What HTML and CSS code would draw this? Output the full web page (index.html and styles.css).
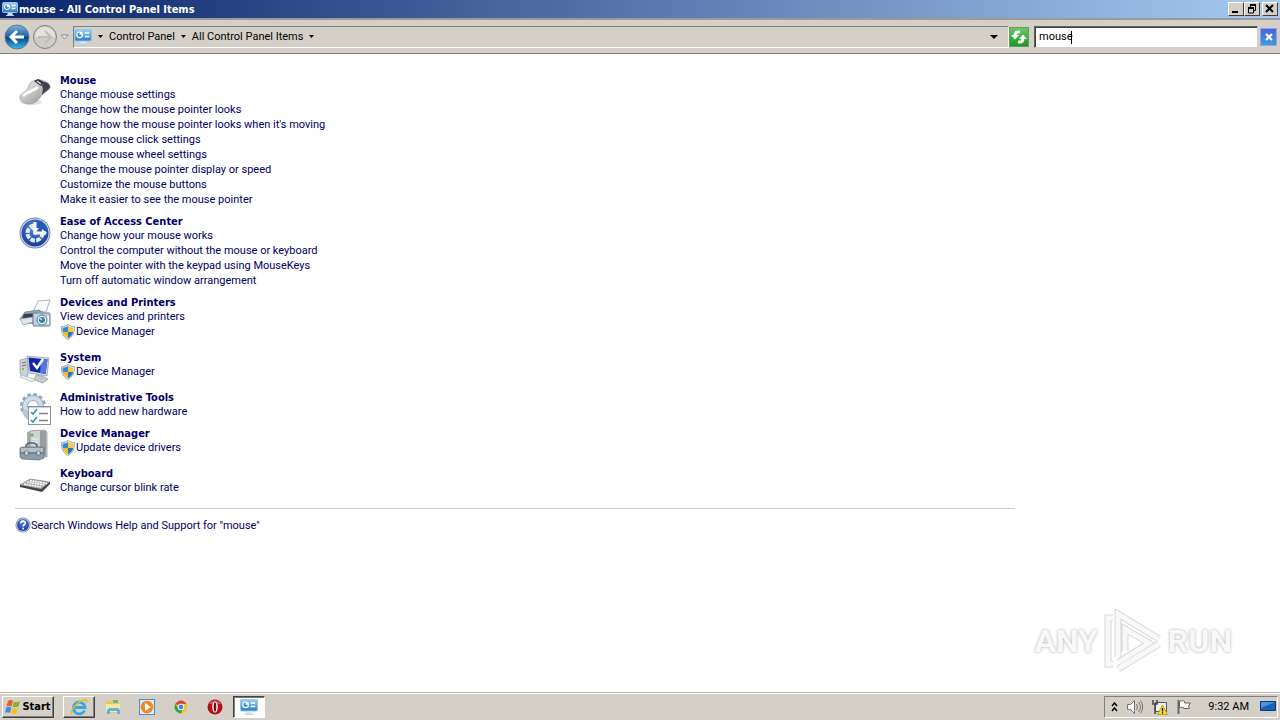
FILE: index.html
```
<!DOCTYPE html>
<html lang="en">
<head>
    <meta charset="UTF-8">
    <meta name="viewport" content="width=device-width, initial-scale=1.0">
    <title>mouse - All Control Panel Items</title>
    <link rel="stylesheet" href="styles.css">
</head>
<body>
    <!-- Shared icons -->
    <svg class="defs" width="0" height="0">
        <defs>
            <linearGradient id="gBlue" x1="0" y1="0" x2="0" y2="1"><stop offset="0" stop-color="#9bd0f2"/><stop offset="1" stop-color="#2a7dc0"/></linearGradient>
            <linearGradient id="gNav" x1="0" y1="0" x2="0" y2="1"><stop offset="0" stop-color="#7fb4dd"/><stop offset=".48" stop-color="#1f5fa6"/><stop offset=".52" stop-color="#0b3f82"/><stop offset="1" stop-color="#35c0f0"/></linearGradient>
            <linearGradient id="gGrey" x1="0" y1="0" x2="1" y2="1"><stop offset="0" stop-color="#f4f4f4"/><stop offset="1" stop-color="#8c8c8c"/></linearGradient>
            <radialGradient id="gBall" cx=".5" cy=".3" r=".7"><stop offset="0" stop-color="#5a86d8"/><stop offset="1" stop-color="#163a9c"/></radialGradient>
        </defs>
        <symbol id="cpanel" viewBox="0 0 16 16">
            <rect x="0.5" y="1.5" width="15" height="10" rx="1" fill="url(#gBlue)" stroke="#8cc4ea"/>
            <circle cx="5" cy="6" r="2.5" fill="#3b8fd0" stroke="#fff"/>
            <path d="M5 6V3.500A2.500 2.500 0 0 1 7.500 6z" fill="#fff"/>
            <path d="M9.500 4.500h4M9.500 7.500h4" stroke="#fff" stroke-width="1.300"/>
            <path d="M6 12h4l1 2H5z" fill="#d9e6ef"/><path d="M4 14.500h8" stroke="#b7cfe0"/>
        </symbol>
        <symbol id="shield" viewBox="0 0 16 16">
            <path d="M8 .5C10 2 12.500 2.500 14.500 2.500c.3 6-1.500 10.500-6.500 13C3 13 1.200 8.500 1.500 2.500 3.500 2.500 6 2 8 .5z" fill="#dfe5ea" stroke="#8d99a3" stroke-width=".8"/>
            <path d="M8 2v6H2.800C2.600 6.500 2.600 5 2.700 3.700 4.700 3.600 6.500 3 8 2z" fill="#3487d6"/>
            <path d="M8 2v6h5.200c.2-1.500.2-3 .1-4.300C11.300 3.600 9.500 3 8 2z" fill="#f9cb32"/>
            <path d="M8 8v6.200C5 12.800 3.300 10.700 2.800 8z" fill="#f4bd20"/>
            <path d="M8 8v6.200c3-1.400 4.700-3.500 5.200-6.200z" fill="#2b74c8"/>
        </symbol>
    </svg>

    <div class="window">
        <header class="titlebar">
            <svg class="icon16"><use href="#cpanel"/></svg>
            <h1>mouse - All Control Panel Items</h1>
            <div class="window-buttons">
                <button type="button" aria-label="Minimize"><svg width="10" height="10"><path d="M1 8h6" stroke="#000" stroke-width="2"/></svg></button>
                <button type="button" aria-label="Restore"><svg width="10" height="10" fill="none" stroke="#000"><path d="M3 1h6M3.500 1v2M8.500 1v5.500H7M1 4h6M1.500 4v5h5V4"/><path d="M3 1h6M1 4h6" stroke-width="2"/></svg></button>
                <button type="button" class="close" aria-label="Close"><svg width="10" height="10"><path d="M1 1l7 7M8 1L1 8" stroke="#000" stroke-width="2"/></svg></button>
            </div>
        </header>

        <nav class="toolbar">
            <button type="button" class="nav-button" aria-label="Back">
                <svg width="26" height="26" viewBox="0 0 26 26"><circle cx="13" cy="13" r="12" fill="url(#gNav)" stroke="#5f7890"/><path d="M20 13H8M13 7l-6 6 6 6" fill="none" stroke="#fff" stroke-width="3"/></svg>
            </button>
            <button type="button" class="nav-button" aria-label="Forward">
                <svg width="26" height="26" viewBox="0 0 26 26"><circle cx="13" cy="13" r="11.500" fill="#cfccc7" stroke="#85827e"/><path d="M3 13a10 10 0 0 1 20 0z" fill="#e4e2df"/><path d="M6 13h12M13 7l6 6-6 6" fill="none" stroke="#c0bdb8" stroke-width="2"/></svg>
            </button>
            <button type="button" class="history" aria-label="Recent pages">
                <svg width="9" height="6"><path d="M1 1h7L4.500 5z" fill="#eee" stroke="#8b8b93"/></svg>
            </button>
            <div class="address">
                <svg class="address-icon"><use href="#cpanel"/></svg>
                <svg class="arrow" width="5" height="3"><path d="M0 0h5L2.500 3z"/></svg>
                <a href="#">Control Panel</a>
                <svg class="arrow" width="5" height="3"><path d="M0 0h5L2.500 3z"/></svg>
                <a href="#">All Control Panel Items</a>
                <svg class="arrow" width="5" height="3"><path d="M0 0h5L2.500 3z"/></svg>
                <button type="button" class="address-drop" aria-label="Previous locations"><svg width="8" height="4"><path d="M0 0h8L4 4z"/></svg></button>
            </div>
            <button type="button" class="refresh" aria-label="Refresh">
                <svg width="18" height="18" viewBox="0 0 18 18" fill="none" stroke="#fff" stroke-width="3"><path d="M10 4C6 3.500 5 5 5 8M8 14c4 .5 5-1 5-4"/><path d="M1 7h8L5 11.500zM9 11h8L13 6.500z" fill="#fff" stroke="none"/></svg>
            </button>
            <div class="search">
                <input type="text" value="mouse" aria-label="Search Control Panel">
                <span class="caret"></span>
            </div>
            <button type="button" class="clear" aria-label="Clear search">
                <svg width="8" height="8"><path d="M1 1l6 6M7 1L1 7" stroke="#fff" stroke-width="2"/></svg>
            </button>
        </nav>

        <main class="content">
            <section class="item">
                <svg class="item-icon" viewBox="0 0 32 32">
                    <ellipse cx="12" cy="26" rx="11" ry="3" fill="#e2e2e2"/>
                    <path d="M14 5c6-3 15 0 17 5 1 4-4 5-8 9-3 4-6 9-13 9-6 0-10-4-9-8 1-3 6-4 8-8 1-3 2-6 5-7z" fill="url(#gGrey)" stroke="#999" stroke-width=".6"/>
                    <path d="M24 6c4 0 7 2 7 5-1 3-5 4-8 8 0-3 2-6 0-9z" fill="#3e404b"/>
                    <path d="M15 5l4-2 6 3-3 4z" fill="#30323d"/><path d="M18 5l4 3" stroke="#ddd" stroke-width="1.500"/>
                    <path d="M4 20c5-5 11-5 15-9" fill="none" stroke="#fff" stroke-width="3"/>
                </svg>
                <div>
                    <h2><a href="#">Mouse</a></h2>
                    <ul>
                        <li><a href="#">Change mouse settings</a></li>
                        <li><a href="#">Change how the mouse pointer looks</a></li>
                        <li><a href="#">Change how the mouse pointer looks when it's moving</a></li>
                        <li><a href="#">Change mouse click settings</a></li>
                        <li><a href="#">Change mouse wheel settings</a></li>
                        <li><a href="#">Change the mouse pointer display or speed</a></li>
                        <li><a href="#">Customize the mouse buttons</a></li>
                        <li><a href="#">Make it easier to see the mouse pointer</a></li>
                    </ul>
                </div>
            </section>

            <section class="item">
                <svg class="item-icon" viewBox="0 0 32 32">
                    <circle cx="16" cy="16" r="15.500" fill="#7d8ba8"/><circle cx="16" cy="16" r="14.500" fill="#d3def2"/><circle cx="16" cy="16" r="13.500" fill="url(#gBall)"/>
                    <circle cx="16" cy="16" r="7.500" fill="none" stroke="#dfe9fa" stroke-width="4" stroke-dasharray="4.700 1.190"/>
                    <path d="M15 4h8l5 8v3H15V4z" fill="#285bb8"/>
                    <path d="M16 5v10M17 16h10" fill="none" stroke="#fff" stroke-width="3"/>
                    <path d="M12 11h8l-4 5zM23 12l5 4-5 4z" fill="#fff"/>
                    <circle cx="16" cy="16" r="2" fill="#fff"/>
                </svg>
                <div>
                    <h2><a href="#">Ease of Access Center</a></h2>
                    <ul>
                        <li><a href="#">Change how your mouse works</a></li>
                        <li><a href="#">Control the computer without the mouse or keyboard</a></li>
                        <li><a href="#">Move the pointer with the keypad using MouseKeys</a></li>
                        <li><a href="#">Turn off automatic window arrangement</a></li>
                    </ul>
                </div>
            </section>

            <section class="item">
                <svg class="item-icon" viewBox="0 0 32 32">
                    <path d="M19 3l12-1-4 12H14z" fill="#f8fafc" stroke="#a8b3bf"/>
                    <path d="M6 14l14-2 6 4v8L5 26l-4-5z" fill="#9aa8b4" stroke="#667480" stroke-width=".7"/>
                    <path d="M5 16l14-1v4L3 21z" fill="#35414d"/><path d="M1 21l13-2v5L4 27z" fill="#dce5ec" stroke="#8b98a4" stroke-width=".6"/>
                    <rect x="14" y="15" width="17" height="13" rx="1" fill="#bfd1df" stroke="#6b7f91"/>
                    <path d="M18 15v-2h6v2" fill="#8aa0b2"/><path d="M29 18v8" stroke="#edf4f9" stroke-width="2"/>
                    <circle cx="23" cy="22" r="5" fill="#e9f1f7" stroke="#61788c"/><circle cx="23" cy="22" r="3" fill="#2986b8"/><circle cx="22" cy="21" r="1" fill="#bfeaff"/>
                </svg>
                <div>
                    <h2><a href="#">Devices and Printers</a></h2>
                    <ul>
                        <li><a href="#">View devices and printers</a></li>
                        <li class="admin"><svg class="icon16"><use href="#shield"/></svg><a href="#">Device Manager</a></li>
                    </ul>
                </div>
            </section>

            <section class="item">
                <svg class="item-icon" viewBox="0 0 32 32">
                    <path d="M1 7l8-2v18l-6 1-2-4z" fill="#cbd1d6" stroke="#8e969c" stroke-width=".7"/><path d="M3 10l4-1M3 13l4-1" stroke="#6d7880"/><circle cx="4" cy="16" r="1" fill="#57b847"/>
                    <path d="M8 3l22 2-2 18L10 20z" fill="#d7dbe0" stroke="#8e969c" stroke-width=".7"/>
                    <path d="M9.500 4.500L28.500 6.500 26.500 21 11 18z" fill="#1026a8"/>
                    <path d="M22 6l6.500.5L26.500 21 21 20z" fill="#4f78e4"/>
                    <path d="M14 10l4 5 6-9" fill="none" stroke="#fff" stroke-width="2.500"/>
                    <path d="M17 22l6 1 6 3-5 4-9-3z" fill="#c4c9ce" stroke="#858d94" stroke-width=".6"/>
                    <path d="M2 22l14 4-3 3-12-5z" fill="#e9ecef" stroke="#a0a7ac" stroke-width=".6"/>
                </svg>
                <div>
                    <h2><a href="#">System</a></h2>
                    <ul>
                        <li class="admin"><svg class="icon16"><use href="#shield"/></svg><a href="#">Device Manager</a></li>
                    </ul>
                </div>
            </section>

            <section class="item">
                <svg class="item-icon" viewBox="0 0 32 32">
                    <circle cx="14" cy="13" r="11.500" fill="none" stroke="#91a5b5" stroke-width="3" stroke-dasharray="3.500 2.520"/>
                    <circle cx="14" cy="13" r="8" fill="none" stroke="#9fb2c1" stroke-width="6"/>
                    <circle cx="14" cy="13" r="8" fill="none" stroke="#d2dde6" stroke-width="4"/>
                    <path d="M3 18l4-2 5 8-3 3c-3-2-5-5-6-9z" fill="#b7c7d4"/>
                    <rect x="9.500" y="13.500" width="22" height="18" fill="#fff" stroke="#8d9499"/>
                    <path d="M10 14.500h21" stroke="#c9d0d6"/>
                    <path d="M12 19l2 2 4-5M12 27l2 2 4-5" fill="none" stroke="#2a9cb8" stroke-width="1.700"/>
                    <path d="M20 20.500h9M20 27.500h9" stroke="#7b858c" stroke-width="1.500"/>
                </svg>
                <div>
                    <h2><a href="#">Administrative Tools</a></h2>
                    <ul>
                        <li><a href="#">How to add new hardware</a></li>
                    </ul>
                </div>
            </section>

            <section class="item">
                <svg class="item-icon" viewBox="0 0 32 32">
                    <path d="M8 3l9-2v23H8z" fill="#a9aeb0"/><path d="M11 2l15-1 2 2v25l-17-2z" fill="#cfd3d4" stroke="#858b8d" stroke-width=".7"/>
                    <path d="M21 2h6v25l-6-1z" fill="#989ea0"/><path d="M13 10h6M13 13h6" stroke="#edf0f0"/><circle cx="13" cy="6" r="1.500" fill="#55b83a"/>
                    <path d="M7 19v-3l3-2h5l3 2v3" fill="none" stroke="#59646c" stroke-width="1.500"/>
                    <path d="M1 19l2-1h19l3 1v10l-5 2-17-1-2-2z" fill="#8e9ca7" stroke="#606c76" stroke-width=".7"/>
                    <path d="M2 19h22v4H2z" fill="#b5c0c8"/><path d="M1 24h24" stroke="#606c76"/><path d="M6 22h3v4H6zM18 22h3v4h-3z" fill="#dfe6eb" stroke="#55616c" stroke-width=".6"/>
                </svg>
                <div>
                    <h2><a href="#">Device Manager</a></h2>
                    <ul>
                        <li class="admin"><svg class="icon16"><use href="#shield"/></svg><a href="#">Update device drivers</a></li>
                    </ul>
                </div>
            </section>

            <section class="item">
                <svg class="item-icon" viewBox="0 0 32 32">
                    <path d="M1 16l10-6 20 3-8 9z" fill="#aaa" stroke="#777" stroke-width=".6"/>
                    <path d="M1 16l21 4 9-7v2l-8 8-22-5z" fill="#444"/>
                    <path d="M5 15l17 3M8 13l17 3M11 11.500l17 3" stroke="#f7f7f7" stroke-width="1.600" stroke-dasharray="2 .6"/>
                </svg>
                <div>
                    <h2><a href="#">Keyboard</a></h2>
                    <ul>
                        <li><a href="#">Change cursor blink rate</a></li>
                    </ul>
                </div>
            </section>

            <footer class="help">
                <svg class="icon16" viewBox="0 0 16 16"><circle cx="8" cy="8" r="7.500" fill="#6f7f9b"/><circle cx="8" cy="8" r="6.800" fill="#d5dfef"/><circle cx="8" cy="8" r="6" fill="url(#gBall)"/><path d="M5.800 6.300C5.800 3.500 10.300 3.600 10.300 6c0 1.600-2.200 1.600-2.200 3.500M8.100 10.800v1.700" fill="none" stroke="#fff" stroke-width="1.700"/></svg>
                <a href="#">Search Windows Help and Support for "mouse"</a>
            </footer>
        </main>
    </div>

    <div class="watermark">
        <span>ANY</span>
        <svg width="60" height="64" viewBox="0 0 60 64" fill="none">
            <path d="M10 9H5v46h5M15 48V5L56 30M56 35L15 60M22 42V20L46 34 16 53" stroke="#d9d9d9" stroke-width="7"/>
            <path d="M10 9H5v46h5M15 48V5L56 30M56 35L15 60M22 42V20L46 34 16 53" stroke="#f8f8f8" stroke-width="5"/>
        </svg>
        <span>RUN</span>
    </div>

    <footer class="taskbar">
        <button type="button" class="start">
            <svg width="16" height="16" viewBox="0 0 16 16"><path d="M3 2c2-1.500 4-1 5 0L6.500 7.500C5 6.500 3.500 6.500 1.500 7.500z" fill="#ed5b24"/><path d="M9 2.500c2 1 4 .8 6-.5l-1.500 5.500c-2 1-4 1-6 .2z" fill="#7db72f"/><path d="M1.200 8.500c2-1 3.700-1 5 0L5 14c-1.700-1.200-3.500-1-5 0z" fill="#3c8fd9"/><path d="M7.200 9c2 1 4 .8 6-.3L12 14c-2 1.200-4 1.200-6 .2z" fill="#fbbd16"/></svg>
            Start
        </button>
        <div class="tasks">
            <button type="button" class="open" aria-label="Internet Explorer">
                <svg width="18" height="18" viewBox="0 0 18 18" fill="none"><path d="M14.500 12.500A5.800 5.800 0 1 1 15 9.500H5" stroke="#35a8e5" stroke-width="2.800"/><path d="M2 16C-1 13 9 2 15.500 1.500c2 .3 1.200 2.500.5 3.500" stroke="#f1b81d" stroke-width="1.500"/></svg>
            </button>
            <button type="button" aria-label="Explorer">
                <svg width="18" height="18" viewBox="0 0 18 18"><path d="M2 3h5l1 2h8v10H2z" fill="#e9c85a"/><path d="M2 6h14v8H2z" fill="#f8e9a0"/><path d="M9 2h5v3H9z" fill="#67b77b"/><path d="M3 16v-4l2-2h9l2 2v4h-3v-3H6v3z" fill="#65b3dc"/></svg>
            </button>
            <button type="button" aria-label="Media Player">
                <svg width="18" height="18" viewBox="0 0 18 18"><rect x="1.500" y="1.500" width="15" height="15" fill="#d8ecfa" stroke="#4b91c9"/><circle cx="9" cy="9" r="6.300" fill="#f4881e"/><path d="M7 5l6 4-6 4z" fill="#fff"/></svg>
            </button>
            <button type="button" aria-label="Chrome">
                <svg width="18" height="18" viewBox="0 0 18 18"><circle cx="9" cy="9" r="6.500" fill="#f4c527"/><path d="M9 9L3.400 5.800A6.500 6.500 0 0 1 14.600 5.800L9 6z" fill="#dc4638"/><path d="M9 15.500A6.500 6.500 0 0 1 3.400 5.800L6.500 11 11 11z" fill="#36a353"/><circle cx="9" cy="9" r="3.200" fill="#fff"/><circle cx="9" cy="9" r="2.400" fill="#4285e8"/></svg>
            </button>
            <button type="button" aria-label="Opera">
                <svg width="18" height="18" viewBox="0 0 18 18"><circle cx="9" cy="9" r="7.500" fill="#b70f18"/><path d="M3 6a7 7 0 0 1 12 0z" fill="#d9545a"/><ellipse cx="9" cy="9" rx="2.800" ry="5.500" fill="#fff"/><ellipse cx="9" cy="9" rx="1.300" ry="4.700" fill="#7b0b10"/></svg>
            </button>
            <button type="button" class="active" aria-label="Control Panel">
                <svg width="18" height="18"><use href="#cpanel"/></svg>
            </button>
        </div>
        <div class="tray">
            <svg width="7" height="10" fill="none" stroke="#000" stroke-width="1.500"><path d="M1 4l2.500-3L6 4M1 9l2.500-3L6 9"/></svg>
            <svg width="18" height="16" viewBox="0 0 18 16" fill="none" stroke="#777"><path d="M1.500 5.500h3l4-4v13l-4-4h-3z" fill="#fff"/><path d="M10.500 5q2 3 0 6M12.500 3q4 5 0 10M14.500 1.500q4.500 6.500 0 13"/></svg>
            <svg width="16" height="16" viewBox="0 0 16 16"><path d="M3.500 3.500h11v9h-11z" fill="#eee" stroke="#555"/><path d="M1 1v4h4V1M3 5v10" fill="none" stroke="#444" stroke-width="1.500"/><path d="M10.500 6l5 9.500h-10z" fill="#ffdc20" stroke="#b08a00" stroke-width=".7"/><path d="M10.500 9v3.500M10.500 13.300v1.200" stroke="#000" stroke-width="1.300"/></svg>
            <svg width="16" height="16" viewBox="0 0 16 16"><path d="M2.500 1v14" stroke="#666" stroke-width="2"/><path d="M3.500 2.500c2-1 4-1 5 0v1.500h6l-2 3 1 2.500h-6v-1c-1-.5-2.500-.5-4 .5z" fill="#fff" stroke="#666"/></svg>
            <time>9:32 AM</time>
            <svg class="desktop" width="16" height="14" viewBox="0 0 16 14"><path d="M.5 1.500h15v9H.5z" fill="#1d60b5" stroke="#0f3671"/><path d="M1 2h14L1 8z" fill="#4b94de"/><path d="M4 12.500h8" stroke="#b9c9d9"/></svg>
        </div>
    </footer>
</body>
</html>
```
FILE: styles.css
```
* {
    box-sizing: border-box;
}
body {
    display: flex;
    flex-direction: column;
    min-height: 100vh;
    margin: 0;
    background: #fff;
    color: #000;
    font-family: Tahoma, Roboto, sans-serif;
    font-size: 11px;
}
h1, h2, ul {
    margin: 0;
    padding: 0;
    font-size: 11px;
}
h1, h2, .start {
    font-family: Tahoma, "DejaVu Sans Condensed", sans-serif;
}
ul {
    list-style: none;
}
a {
    color: inherit;
    text-decoration: none;
}
button {
    display: flex;
    align-items: center;
    justify-content: center;
    padding: 0;
    border: none;
    background: none;
    color: #000;
    font-size: 11px;
}
svg {
    display: block;
    flex: none;
}
.defs {
    position: absolute;
}
.icon16 {
    width: 16px;
    height: 16px;
}
.window {
    flex: 1;
}

/* Title bar */
.titlebar {
    display: flex;
    align-items: center;
    height: 18px;
    padding: 0 2px;
    background: linear-gradient(to right, #0a246a, #a6caf0);
    color: #fff;
}
.titlebar h1 {
    flex: 1;
    padding-left: 1px;
}
.window-buttons {
    display: flex;
}
.window-buttons button {
    width: 16px;
    height: 14px;
    background: #d4d0c8;
    border: 1px solid;
    border-color: #fff #404040 #404040 #fff;
}
.window-buttons .close {
    margin-left: 2px;
}

/* Navigation and address */
.toolbar {
    display: flex;
    align-items: center;
    height: 36px;
    padding: 0 3px 0 4px;
    background: #d4d0c8;
    border-top: 2px solid #9c9a96;
    border-bottom: 1px solid #808080;
}
.nav-button {
    width: 26px;
    margin-right: 2px;
}
.history {
    width: 9px;
    margin-right: 4px;
}
.address {
    display: flex;
    flex: 1;
    align-items: center;
    height: 22px;
    border: 1px solid;
    border-color: #808080 #fff #fff #808080;
}
.address-icon {
    width: 18px;
    height: 18px;
}
.address a {
    margin-left: 6px;
}
.arrow {
    margin-left: 6px;
}
.address-drop {
    width: 20px;
    height: 18px;
    margin-left: auto;
    margin-right: 4px;
}
.refresh {
    width: 20px;
    height: 20px;
    background: linear-gradient(#6cc668, #159a20);
    border: 1px solid #6a9a68;
}
.search {
    position: relative;
    width: 224px;
    margin: 0 2px 0 5px;
}
.search input {
    display: block;
    width: 100%;
    height: 22px;
    padding: 0 4px;
    border: 1px solid;
    border-color: #606060 #d4d0c8 #d4d0c8 #606060;
    box-shadow: inset 1px 1px #404040;
    border-radius: 0;
    background: #fff;
    font: inherit;
}
.caret {
    position: absolute;
    top: 5px;
    left: 37px;
    width: 1px;
    height: 13px;
    background: #000;
}
.clear {
    width: 17px;
    height: 18px;
    background: linear-gradient(#4e62d8, #3f9ae0);
    border: 1px solid #8fa8dc;
}

/* Search results */
.content {
    padding: 19px 15px;
    color: #000066;
}
.item {
    display: flex;
    margin-bottom: 7px;
    padding-left: 4px;
}
.item-icon {
    width: 32px;
    height: 32px;
    margin: 3px 9px -6px 0;
}
.item h2 {
    margin-bottom: -2px;
    line-height: 16px;
}
.item li {
    line-height: 15px;
}
.item .admin {
    display: flex;
    height: 19px;
}
.help {
    display: flex;
    align-items: center;
    max-width: 1000px;
    margin-top: 13px;
    padding-top: 8px;
    border-top: 1px solid #ccc;
}

/* Watermark */
.watermark {
    position: absolute;
    right: 48px;
    bottom: 47px;
    display: flex;
    align-items: center;
    gap: 5px;
    color: #f8f8f8;
    font-family: Roboto, sans-serif;
    font-size: 32px;
    font-weight: bold;
    text-shadow: 0 0 3px #aaa;
}

/* Taskbar */
.taskbar {
    display: flex;
    align-items: center;
    height: 28px;
    padding: 0 2px;
    background: #d4d0c8;
    border-top: 1px solid #b8b5ae;
    box-shadow: inset 0 1px #fff;
}
.start {
    gap: 1px;
    width: 52px;
    height: 22px;
    border: 1px solid;
    border-color: #fff #404040 #404040 #fff;
    box-shadow: inset -1px -1px #808080;
    font-weight: bold;
}
.tasks {
    display: flex;
    flex: 1;
    gap: 2px;
    margin-left: 9px;
}
.tasks button {
    width: 32px;
    height: 22px;
    border: 1px solid transparent;
}
.tasks .open {
    border-color: #fff #404040 #404040 #fff;
    box-shadow: inset -1px -1px #808080;
}
.tasks .active {
    background: #fff;
    border-color: #404040 #fff #fff #404040;
    box-shadow: inset 1px 1px #808080;
}
.tray {
    display: flex;
    align-items: center;
    gap: 8px;
    height: 22px;
    padding: 0 1px 0 6px;
    border: 1px solid;
    border-color: #808080 #fff #fff #808080;
}
.tray time {
    margin-left: 8px;
}
.desktop {
    margin-left: 3px;
}
```
